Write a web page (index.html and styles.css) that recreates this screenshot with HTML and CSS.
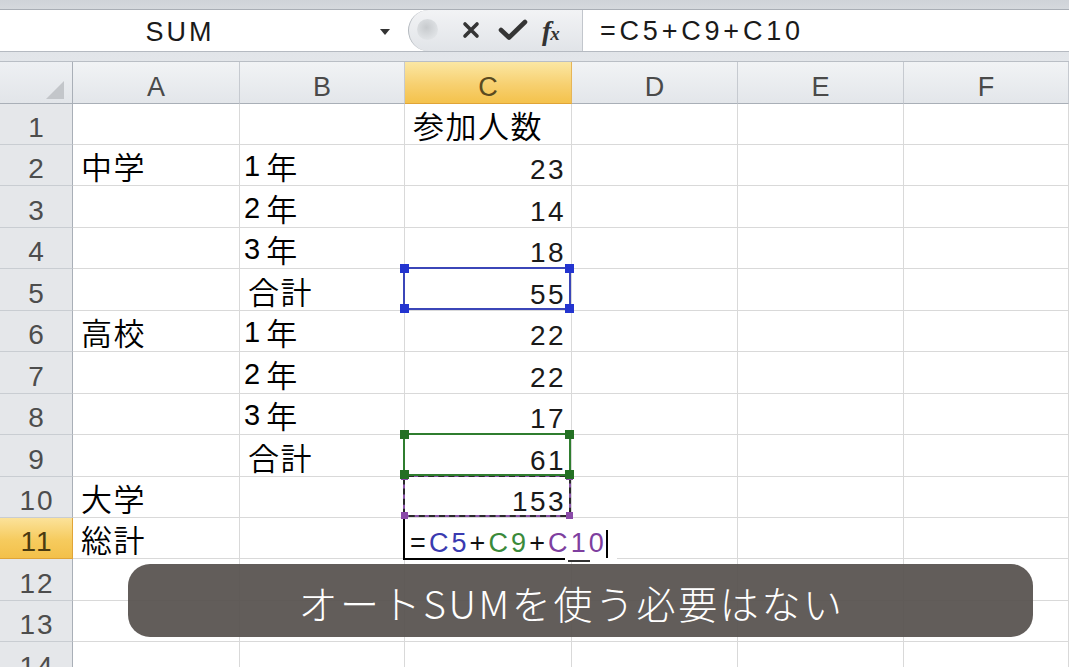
FILE: index.html
```html
<!DOCTYPE html>
<html lang="ja">
<head>
<meta charset="utf-8">
<title>Excel</title>
<link rel="stylesheet" href="styles.css">
</head>
<body>
<div class="app">
  <div class="fbar">
    <div class="fbar-row">
      <div class="namebox"><span class="name">SUM</span><span class="drop"></span></div>
      <div class="tools">
        <span class="knob"></span>
        <svg class="ic-x" width="18" height="18" viewBox="0 0 18 18"><path d="M3 3L15 15M15 3L3 15" stroke="#353535" stroke-width="3.6" stroke-linecap="round"/></svg>
        <svg class="ic-check" width="30" height="22" viewBox="0 0 30 22"><path d="M3 11L11 18.5L27 3" fill="none" stroke="#353535" stroke-width="4.6" stroke-linecap="round" stroke-linejoin="round"/></svg>
        <span class="fx"><span class="fx-f">f</span><span class="fx-x">x</span></span>
      </div>
      <div class="formula">=C5+C9+C10</div>
    </div>
  </div>
  <div class="sheet">
    <div class="grid">
      <div class="corner"><svg class="tri" width="18" height="18" viewBox="0 0 18 18"><path d="M18 0V18H0Z" fill="#c3c6ca"/></svg></div>
      <div class="ch">A</div><div class="ch">B</div><div class="ch ch-on">C</div><div class="ch">D</div><div class="ch">E</div><div class="ch">F</div>

      <div class="rh">1</div><div class="c"></div><div class="c"></div><div class="c jp">参加人数</div><div class="c"></div><div class="c"></div><div class="c"></div>

      <div class="rh">2</div><div class="c jp">中学</div><div class="c jp"><span class="d">1</span>年</div><div class="c num">23</div><div class="c"></div><div class="c"></div><div class="c"></div>

      <div class="rh">3</div><div class="c"></div><div class="c jp"><span class="d">2</span>年</div><div class="c num">14</div><div class="c"></div><div class="c"></div><div class="c"></div>

      <div class="rh">4</div><div class="c"></div><div class="c jp"><span class="d">3</span>年</div><div class="c num">18</div><div class="c"></div><div class="c"></div><div class="c"></div>

      <div class="rh">5</div><div class="c"></div><div class="c jp">合計</div><div class="c num">55<div class="sel sel-blue"><i class="h tl"></i><i class="h tr"></i><i class="h bl"></i><i class="h br"></i></div></div><div class="c"></div><div class="c"></div><div class="c"></div>

      <div class="rh">6</div><div class="c jp">高校</div><div class="c jp"><span class="d">1</span>年</div><div class="c num">22</div><div class="c"></div><div class="c"></div><div class="c"></div>

      <div class="rh">7</div><div class="c"></div><div class="c jp"><span class="d">2</span>年</div><div class="c num">22</div><div class="c"></div><div class="c"></div><div class="c"></div>

      <div class="rh">8</div><div class="c"></div><div class="c jp"><span class="d">3</span>年</div><div class="c num">17</div><div class="c"></div><div class="c"></div><div class="c"></div>

      <div class="rh">9</div><div class="c"></div><div class="c jp">合計</div><div class="c num">61<div class="sel sel-green"><i class="h tl"></i><i class="h tr"></i><i class="h bl"></i><i class="h br"></i></div></div><div class="c"></div><div class="c"></div><div class="c"></div>

      <div class="rh">10</div><div class="c jp">大学</div><div class="c"></div><div class="c num">153<div class="sel sel-purple"><div class="ants"></div><i class="h tl"></i><i class="h tr"></i><i class="h bl"></i><i class="h br"></i></div></div><div class="c"></div><div class="c"></div><div class="c"></div>

      <div class="rh rh-on">11</div><div class="c jp">総計</div><div class="c"></div><div class="c"><div class="editor"><span class="ref-eq">=</span><span class="ref-b">C5</span>+<span class="ref-g">C9</span>+<span class="ref-p">C10</span><span class="caret"></span><span class="ed-line"></span><span class="ed-tick"></span></div></div><div class="c"></div><div class="c"></div><div class="c"></div>

      <div class="rh">12</div><div class="c"></div><div class="c"></div><div class="c"></div><div class="c"></div><div class="c"></div><div class="c"></div>

      <div class="rh">13</div><div class="c"></div><div class="c"></div><div class="c"></div><div class="c"></div><div class="c"></div><div class="c"></div>

      <div class="rh">14</div><div class="c"></div><div class="c"></div><div class="c"></div><div class="c"></div><div class="c"></div><div class="c"></div>
    </div>
    <div class="caption">オートSUMを使う必要はない</div>
  </div>
</div>
</body>
</html>
```

FILE: styles.css
```css
html, body {
  margin: 0;
  padding: 0;
  background: #ffffff;
}
body {
  width: 1069px;
  height: 667px;
  overflow: hidden;
  font-family: "Noto Sans CJK JP", "Liberation Sans", sans-serif;
}
.app {
  width: 1069px;
  height: 667px;
  overflow: hidden;
}

/* formula bar */
.fbar {
  height: 62px;
  box-sizing: border-box;
  padding-top: 9px;
  background: linear-gradient(#cfd3d8, #dfe2e6 40%, #e3e6ea);
  border-bottom: 1px solid #b9bec5;
}
.fbar-row {
  height: 43px;
  box-sizing: border-box;
  display: flex;
  background: #ffffff;
  border-top: 1px solid #a9aeb5;
  border-bottom: 1px solid #b5bac1;
}
.namebox {
  width: 408px;
  display: flex;
  align-items: center;
}
.name {
  width: 360px;
  text-align: center;
  font-family: "Liberation Sans", sans-serif;
  font-size: 27px;
  letter-spacing: 3px;
  color: #1a1a1a;
  padding-top: 3px;
}
.drop {
  margin-left: 20px;
  width: 0;
  height: 0;
  border-left: 5px solid transparent;
  border-right: 5px solid transparent;
  border-top: 6px solid #333333;
  margin-top: 2px;
}
.tools {
  width: 174px;
  box-sizing: border-box;
  display: flex;
  align-items: center;
  background: linear-gradient(#f2f3f5, #e1e4e8);
  border-left: 1px solid #b4b9bf;
  border-radius: 21px 0 0 21px;
}
.knob {
  width: 21px;
  height: 21px;
  margin-left: 8px;
  border-radius: 50%;
  background: radial-gradient(circle at 45% 40%, #c7cacd, #dcdfe2 60%, #e9ebee);
  margin-top: -2px;
}
.ic-x {
  margin-left: 24px;
  margin-top: -2px;
}
.ic-check {
  margin-left: 18px;
  margin-top: -2px;
}
.fx {
  margin-left: 14px;
  font-family: "Liberation Serif", serif;
  font-style: italic;
  font-weight: bold;
  color: #333333;
  display: flex;
  align-items: baseline;
}
.fx-f {
  font-size: 28px;
}
.fx-x {
  font-size: 19px;
  margin-left: -1px;
}
.formula {
  flex: 1;
  display: flex;
  align-items: center;
  padding-left: 17px;
  border-left: 1px solid #c2c6cc;
  font-family: "Liberation Sans", sans-serif;
  font-size: 27px;
  letter-spacing: 3.8px;
  color: #1a1a1a;
  padding-top: 2px;
}

/* sheet */
.sheet {
  position: relative;
}
.grid {
  display: grid;
  grid-template-columns: 73px 167px 165px 167px 166px 166px 165px;
  grid-template-rows: 41.6px repeat(14, 41.45px);
}
.corner, .ch, .rh, .c {
  box-sizing: border-box;
  position: relative;
}
.corner {
  background: linear-gradient(#eef0f3, #e2e5e9);
  border-right: 1px solid #a9afb7;
  border-bottom: 1px solid #a9afb7;
}
.tri {
  position: absolute;
  right: 8px;
  bottom: 4px;
}
.ch {
  background: linear-gradient(#f1f3f5, #e3e6ea);
  border-right: 1px solid #c6cad0;
  border-bottom: 1px solid #a9afb7;
  display: flex;
  justify-content: center;
  align-items: flex-end;
  padding-bottom: 2px;
  font-family: "Liberation Sans", sans-serif;
  font-size: 27px;
  line-height: 27px;
  color: #4a4a4a;
}
.ch-on {
  background: linear-gradient(#fbe7a3, #f7d070 55%, #f4c24c);
  border-bottom: 1px solid #e0a437;
  border-right: 1px solid #e6b557;
  color: #5a4a20;
}
.rh {
  background: #e5e7ea;
  border-right: 1px solid #a9afb7;
  border-bottom: 1px solid #c9cdd2;
  display: flex;
  justify-content: center;
  align-items: flex-end;
  padding-bottom: 2px;
  padding-left: 2px;
  font-family: "Liberation Sans", sans-serif;
  font-size: 28px;
  line-height: 28px;
  letter-spacing: 2px;
  color: #4d4d4d;
}
.rh-on {
  background: linear-gradient(#fbe29a, #f6cb5e 55%, #f3c04a);
  border-right: 1px solid #e0a437;
  border-bottom: 1px solid #e0a437;
  color: #4a3a10;
}
.c {
  background: #ffffff;
  border-right: 1px solid #d9d9d9;
  border-bottom: 1px solid #d9d9d9;
  display: flex;
  align-items: flex-end;
  color: #111111;
}
.jp {
  font-family: "Noto Sans CJK JP", sans-serif;
  font-weight: 350;
  font-size: 31px;
  line-height: 32px;
  letter-spacing: 1.5px;
  padding-left: 8px;
  padding-bottom: 3px;
  color: #000000;
}
.d {
  font-family: "Liberation Sans", sans-serif;
  font-weight: 400;
  font-size: 29px;
  margin-left: -4px;
  margin-right: 6px;
  letter-spacing: 0;
}
.num {
  justify-content: flex-end;
  font-family: "Liberation Sans", sans-serif;
  font-size: 28px;
  line-height: 28px;
  letter-spacing: 2.4px;
  padding-right: 5px;
  padding-bottom: 1px;
  color: #1a1a1a;
}

/* selection outlines */
.sel {
  position: absolute;
  left: -2px;
  top: -2px;
  width: calc(100% + 2px);
  height: calc(100% + 2px);
  box-sizing: border-box;
  border: 2px solid;
  z-index: 4;
}
.sel-blue {
  border-color: #3b46b8;
  z-index: 5;
}
.sel-green {
  border-color: #2f7d2f;
  z-index: 6;
}
.sel-purple {
  border-color: #8a55a8;
  z-index: 4;
}
.ants {
  position: absolute;
  left: -2px;
  top: -2px;
  right: -2px;
  bottom: -2px;
  border: 2px dashed #2a2a2a;
  border-radius: 5px;
}
.h {
  position: absolute;
  width: 9px;
  height: 9px;
}
.sel-blue .h { background: #2334d0; }
.sel-green .h { background: #237023; }
.sel-purple .h { background: #8a4aa8; width: 7px; height: 7px; }
.tl { left: -5px; top: -5px; }
.tr { right: -5px; top: -5px; }
.bl { left: -5px; bottom: -5px; }
.br { right: -5px; bottom: -5px; }
.sel-purple .tl { left: -4px; top: -4px; }
.sel-purple .tr { right: -4px; top: -4px; }
.sel-purple .bl { left: -4px; bottom: -4px; }
.sel-purple .br { right: -4px; bottom: -4px; }

/* in-cell editor */
.editor {
  position: absolute;
  left: -2px;
  top: 0;
  width: 214px;
  height: 42px;
  box-sizing: border-box;
  background: #ffffff;
  border-left: 2px solid #000000;
  z-index: 3;
  display: flex;
  align-items: flex-end;
  padding-left: 5px;
  padding-bottom: 3px;
  font-family: "Liberation Sans", sans-serif;
  font-size: 27px;
  line-height: 27px;
  letter-spacing: 3.1px;
  color: #111111;
}
.ref-b { color: #3a3ab0; }
.ref-g { color: #3a8a3a; }
.ref-p { color: #7e3f9f; }
.caret {
  display: inline-block;
  width: 2px;
  height: 28px;
  background: #000000;
  margin-left: -1px;
  margin-bottom: -1px;
}
.ed-line {
  position: absolute;
  left: -2px;
  bottom: 0;
  width: 162px;
  height: 2px;
  background: #000000;
}
.ed-tick {
  position: absolute;
  left: 163px;
  bottom: -2px;
  width: 22px;
  height: 2px;
  background: #333333;
}

/* caption overlay */
.caption {
  position: absolute;
  left: 128px;
  top: 502px;
  width: 905px;
  height: 73px;
  box-sizing: border-box;
  border-radius: 22px;
  background: rgba(86, 81, 78, 0.93);
  color: #ffffff;
  display: flex;
  justify-content: center;
  align-items: center;
  padding-right: 18px;
  padding-top: 2px;
  font-family: "Noto Sans CJK JP", sans-serif;
  font-weight: 300;
  font-size: 39px;
  letter-spacing: 2.6px;
  z-index: 10;
}
```
